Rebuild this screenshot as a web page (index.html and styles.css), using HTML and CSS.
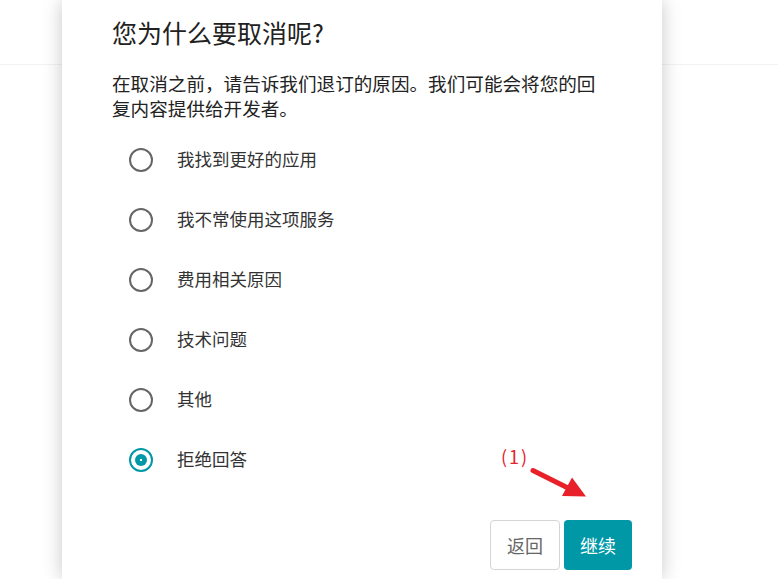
FILE: index.html
```html
<!DOCTYPE html>
<html lang="zh-CN">
<head>
    <meta charset="UTF-8">
    <meta name="viewport" content="width=device-width, initial-scale=1.0">
    <title>取消订阅</title>
    <link rel="stylesheet" href="styles.css">
</head>
<body>
    <div class="page-header"></div>

    <div class="dialog">
        <h1 class="dialog-title">您为什么要取消呢?</h1>
        <p class="dialog-desc">在取消之前，请告诉我们退订的原因。我们可能会将您的回复内容提供给开发者。</p>

        <form class="reasons">
            <label class="reason">
                <input type="radio" name="reason">
                <span class="radio"></span>
                <span class="reason-text">我找到更好的应用</span>
            </label>
            <label class="reason">
                <input type="radio" name="reason">
                <span class="radio"></span>
                <span class="reason-text">我不常使用这项服务</span>
            </label>
            <label class="reason">
                <input type="radio" name="reason">
                <span class="radio"></span>
                <span class="reason-text">费用相关原因</span>
            </label>
            <label class="reason">
                <input type="radio" name="reason">
                <span class="radio"></span>
                <span class="reason-text">技术问题</span>
            </label>
            <label class="reason">
                <input type="radio" name="reason">
                <span class="radio"></span>
                <span class="reason-text">其他</span>
            </label>
            <label class="reason">
                <input type="radio" name="reason" checked>
                <span class="radio"></span>
                <span class="reason-text">拒绝回答</span>
            </label>
        </form>

        <div class="actions">
            <button type="button" class="btn btn-back">返回</button>
            <button type="button" class="btn btn-next">继续</button>
        </div>
    </div>

    <!-- tutorial annotation -->
    <span class="note-label">(1)</span>
    <svg class="note-arrow" width="778" height="579" viewBox="0 0 778 579">
        <line x1="533" y1="470.5" x2="569" y2="488.5" stroke="#e8202a" stroke-width="5" stroke-linecap="round"/>
        <polygon points="586,496.5 562,496 572,477.5" fill="#e8202a"/>
    </svg>
</body>
</html>
```

FILE: styles.css
```css
body {
    margin: 0;
    padding: 0;
    background-color: #fff;
    font-family: "Noto Sans CJK SC", "Liberation Sans", sans-serif;
    color: #222;
    height: 579px;
    overflow: hidden;
    position: relative;
}
.page-header {
    height: 64px;
    border-bottom: 1px solid #f2f2f2;
}
.dialog {
    position: absolute;
    top: 0;
    bottom: 0;
    left: 62px;
    width: 600px;
    box-sizing: border-box;
    padding: 14px 30px 0 50px;
    background-color: #fff;
    box-shadow: 0 0 18px rgba(0, 0, 0, 0.22);
}
.dialog-title {
    margin: 0;
    font-size: 25px;
    font-weight: normal;
    line-height: 36px;
    color: #222;
}
.dialog-desc {
    margin: 20px 0 0;
    max-width: 500px;
    font-size: 18.6px;
    line-height: 25px;
    color: #222;
}
.reasons {
    margin-top: 10px;
    display: flex;
    flex-direction: column;
}
.reason {
    height: 60px;
    display: flex;
    align-items: center;
    padding-left: 17px;
    cursor: pointer;
}
.reason input {
    display: none;
}
.radio {
    width: 24px;
    height: 24px;
    box-sizing: border-box;
    border: 2px solid #666;
    border-radius: 50%;
    position: relative;
    flex-shrink: 0;
}
.reason input:checked + .radio {
    border-color: #0097a7;
}
.reason input:checked + .radio::after {
    content: "";
    position: absolute;
    left: 4px;
    top: 4px;
    width: 12px;
    height: 12px;
    border-radius: 50%;
    background: radial-gradient(circle, #fff 0 1px, #0097a7 1.5px);
}
.reason-text {
    margin-left: 24px;
    margin-top: -3px;
    font-size: 17.5px;
    color: #333;
}
.actions {
    margin-top: 30px;
    display: flex;
    justify-content: flex-end;
    gap: 4px;
}
.btn {
    height: 50px;
    padding: 0;
    font-family: inherit;
    font-size: 18px;
    border-radius: 4px;
    cursor: pointer;
}
.btn-back {
    width: 70px;
    background-color: #fff;
    color: #666;
    border: 1px solid #d4d4d4;
}
.btn-next {
    width: 68px;
    background-color: #0097a7;
    color: #fff;
    border: none;
}
.note-label {
    position: absolute;
    left: 501px;
    top: 443px;
    font-size: 18px;
    color: #e8202a;
    letter-spacing: 2px;
}
.note-arrow {
    position: absolute;
    left: 0;
    top: 0;
    pointer-events: none;
}
```
